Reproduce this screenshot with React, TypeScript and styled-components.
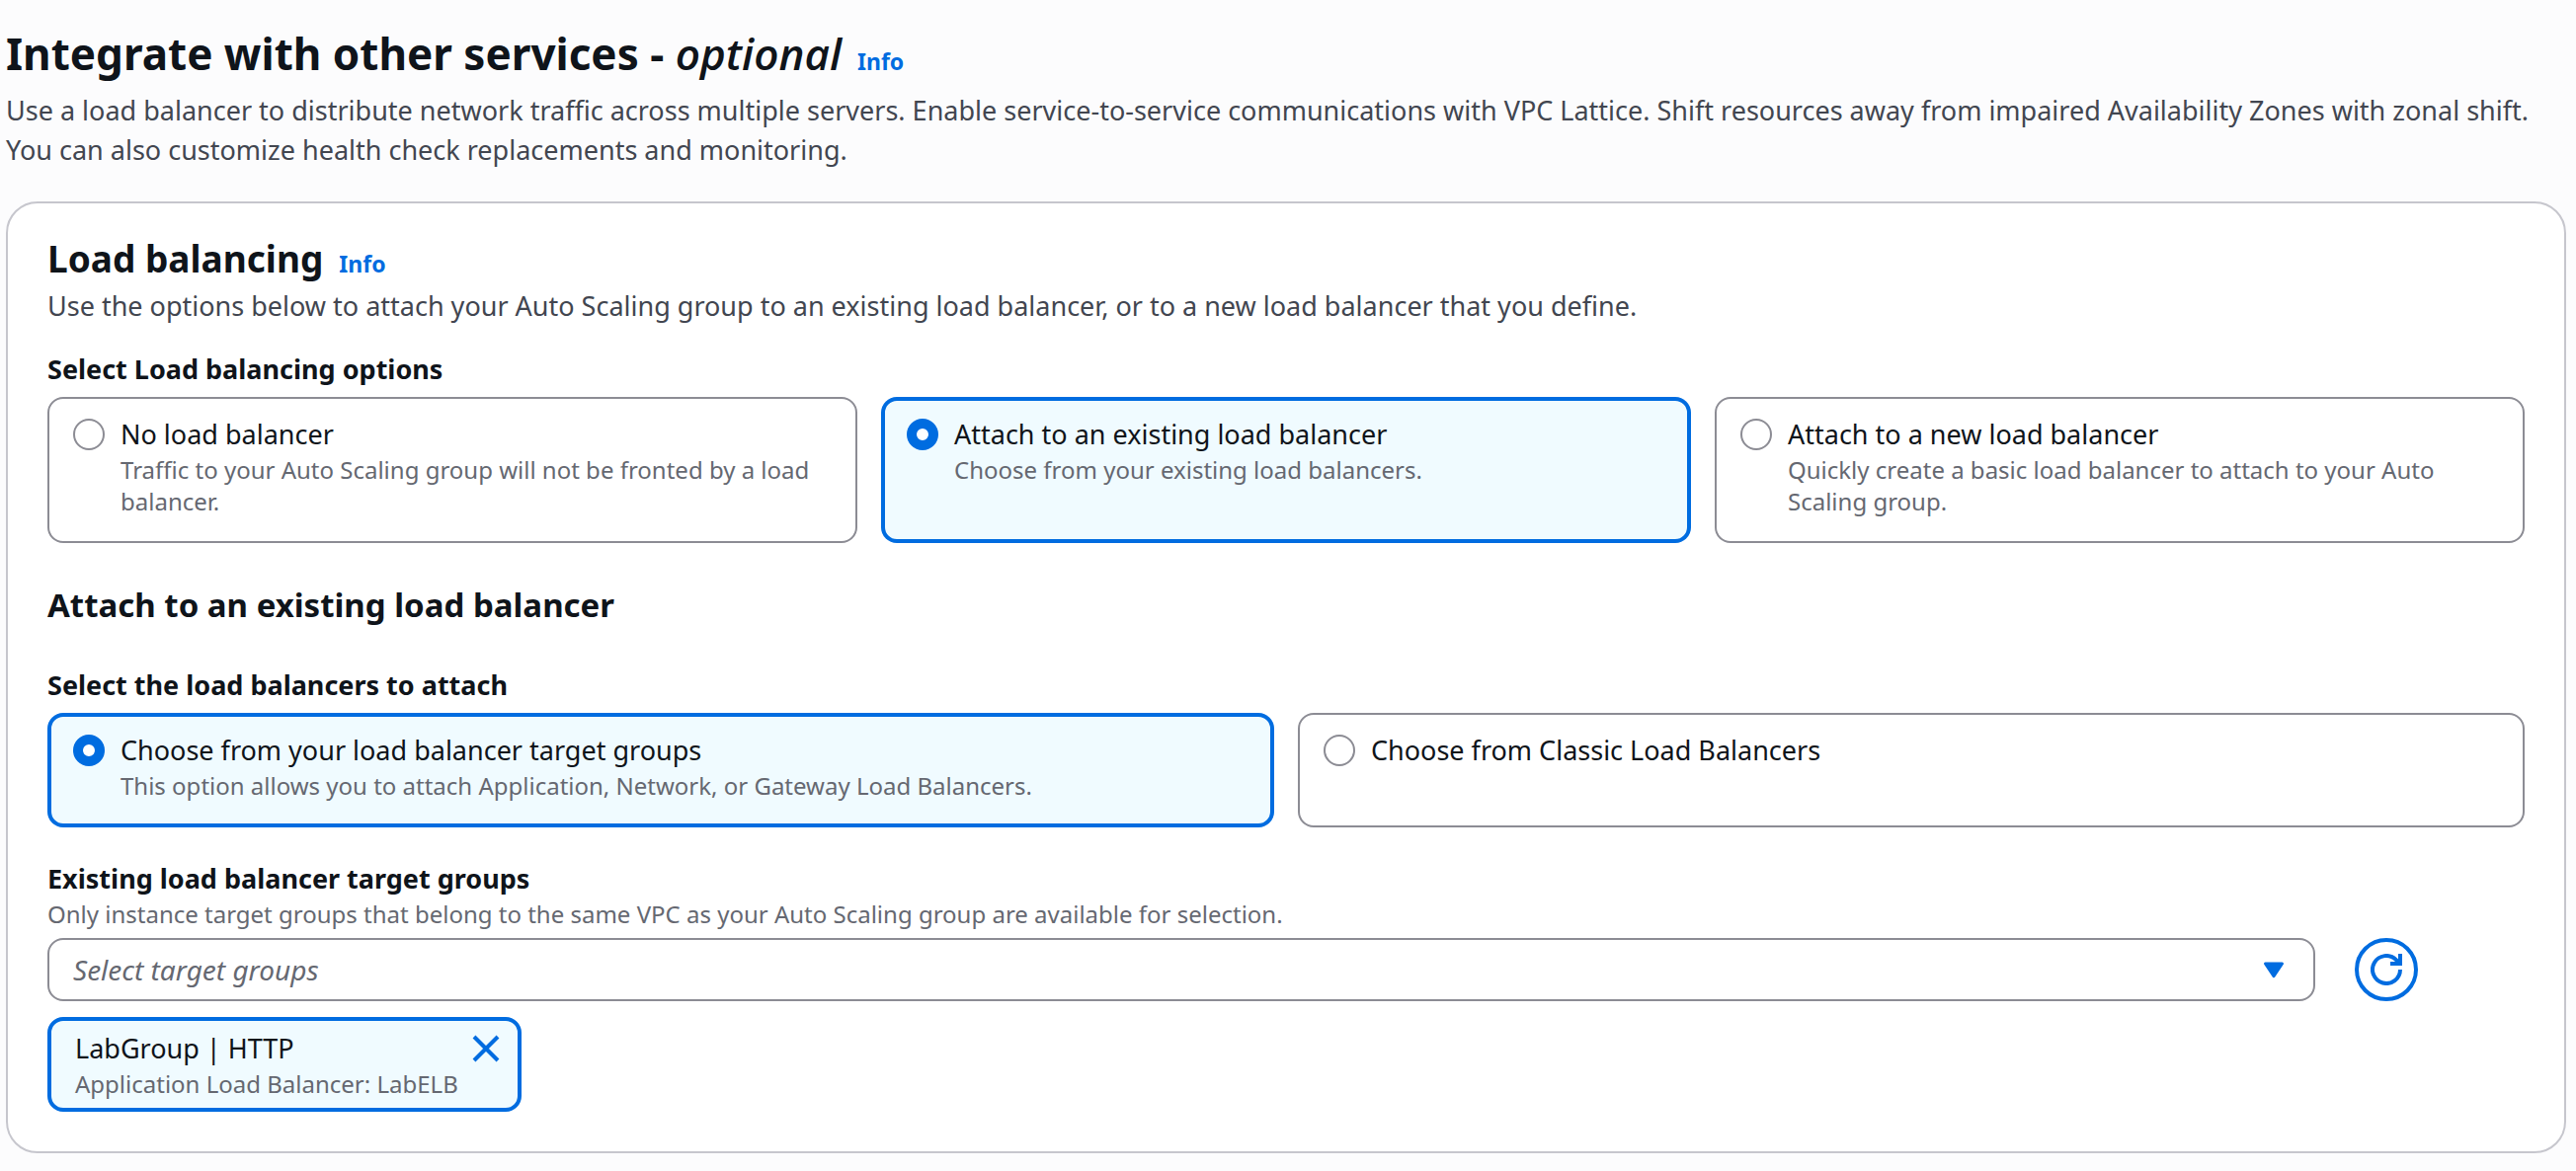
import React, { useId, useState } from "react";
import styled, { createGlobalStyle, css } from "styled-components";

const color = {
  page: "#fcfcfd",
  panel: "#ffffff",
  panelBorder: "#c6c6cd",
  controlBorder: "#8c8c94",
  heading: "#0f141a",
  body: "#424650",
  muted: "#656871",
  accent: "#006ce0",
  accentSoft: "#f0fbff",
};

const GlobalStyle = createGlobalStyle`
  *, *::before, *::after { box-sizing: border-box; }
  body {
    margin: 0;
    background: ${color.page};
    color: ${color.heading};
    font-family: "Noto Sans", "Open Sans", sans-serif;
    font-size: 27px;
    line-height: 40px;
  }
  h1, h2, h3, p, fieldset { margin: 0; }
`;

const Page = styled.main`
  display: flex;
  flex-direction: column;
  gap: 32px;
  padding: 24px 10px 16px 6px;
`;

const PageHeader = styled.header`
  display: flex;
  flex-direction: column;
  gap: 8px;
`;

const HeadingRow = styled.div`
  display: flex;
  align-items: baseline;
  gap: 16px;
`;

const PageTitle = styled.h1`
  font-size: 44px;
  line-height: 60px;
  font-weight: 700;

  em {
    font-family: "Open Sans", "Noto Sans", sans-serif;
    font-weight: 600;
  }
`;

const PanelTitle = styled.h2`
  font-size: 37px;
  line-height: 48px;
  font-weight: 700;
`;

const SectionTitle = styled.h3`
  padding-top: 2px;
  font-size: 33px;
  line-height: 42px;
  font-weight: 700;
`;

const InfoLink = styled.a`
  color: ${color.accent};
  font-size: 23px;
  line-height: 32px;
  font-weight: 700;
  text-decoration: none;
`;

const Lead = styled.p`
  color: ${color.body};
`;

const Panel = styled.section`
  display: flex;
  flex-direction: column;
  gap: 40px;
  padding: 32px 40px 40px;
  background: ${color.panel};
  border: 2px solid ${color.panelBorder};
  border-radius: 32px;
`;

const PanelIntro = styled.div`
  display: flex;
  flex-direction: column;
  gap: 24px;
`;

const PanelHeader = styled.header`
  display: flex;
  flex-direction: column;
  gap: 4px;
`;

const FieldStack = styled.div`
  display: flex;
  flex-direction: column;
  gap: 32px;
`;

const TileGroup = styled.fieldset`
  min-width: 0;
  padding: 0;
  border: 0;
`;

const TileLegend = styled.legend`
  padding: 0 0 8px;
  font-weight: 700;
`;

const TileGrid = styled.div<{ $columns: number }>`
  display: grid;
  grid-template-columns: repeat(${(p) => p.$columns}, minmax(0, 1fr));
  gap: 24px;
`;

const TileCard = styled.label<{ $selected: boolean }>`
  display: flex;
  align-items: flex-start;
  gap: 16px;
  padding: 18px 26px 26px;
  border-radius: 16px;
  box-shadow: inset 0 0 0 2px ${color.controlBorder};
  cursor: pointer;
  ${(p) =>
    p.$selected &&
    css`
      background: ${color.accentSoft};
      box-shadow: inset 0 0 0 4px ${color.accent};
    `}
`;

const Radio = styled.input`
  appearance: none;
  flex: none;
  width: 32px;
  height: 32px;
  margin: 4px 0;
  border: 2px solid ${color.controlBorder};
  border-radius: 50%;
  background: ${color.panel};

  &:checked {
    border: 10px solid ${color.accent};
  }
`;

const TileText = styled.span`
  display: flex;
  flex-direction: column;
  min-width: 0;
`;

const Hint = styled.span`
  display: block;
  color: ${color.muted};
  font-size: 24px;
  line-height: 32px;
`;

const FieldLabel = styled.label`
  display: block;
  font-weight: 700;
`;

const SelectRow = styled.div`
  display: grid;
  grid-template-columns: repeat(12, minmax(0, 1fr));
  column-gap: 40px;
  padding: 8px 0 16px;
`;

const SelectBox = styled.div`
  position: relative;
  grid-column: span 11;
`;

const Select = styled.select`
  appearance: none;
  display: block;
  width: 100%;
  height: 64px;
  padding: 0 80px 0 24px;
  border: 2px solid ${color.controlBorder};
  border-radius: 16px;
  background: ${color.panel};
  color: ${color.muted};
  font: inherit;
  font-size: 28px;
  font-style: italic;
`;

const Caret = styled.svg`
  position: absolute;
  top: 16px;
  right: 26px;
  width: 32px;
  height: 32px;
  pointer-events: none;
`;

const RefreshButton = styled.button`
  display: flex;
  align-items: center;
  justify-content: center;
  width: 64px;
  height: 64px;
  padding: 0;
  border: 4px solid ${color.accent};
  border-radius: 50%;
  background: ${color.panel};
  color: ${color.accent};
`;

const Token = styled.div`
  display: flex;
  align-items: flex-start;
  gap: 8px;
  width: fit-content;
  padding: 8px 12px 8px 24px;
  border: 4px solid ${color.accent};
  border-radius: 16px;
  background: ${color.accentSoft};
`;

const DismissButton = styled.button`
  display: flex;
  padding: 4px;
  border: 0;
  background: transparent;
  color: ${color.accent};
`;

type TileOption = { value: string; label: string; hint?: string };

function Tiles(props: { legend: string; options: TileOption[]; initial: string }) {
  const name = useId();
  const [value, setValue] = useState(props.initial);
  return (
    <TileGroup>
      <TileLegend>{props.legend}</TileLegend>
      <TileGrid $columns={props.options.length}>
        {props.options.map((option) => (
          <TileCard key={option.value} $selected={option.value === value}>
            <Radio
              type="radio"
              name={name}
              value={option.value}
              checked={option.value === value}
              onChange={() => setValue(option.value)}
            />
            <TileText>
              <span>{option.label}</span>
              {option.hint && <Hint>{option.hint}</Hint>}
            </TileText>
          </TileCard>
        ))}
      </TileGrid>
    </TileGroup>
  );
}

const balancingOptions: TileOption[] = [
  {
    value: "none",
    label: "No load balancer",
    hint: "Traffic to your Auto Scaling group will not be fronted by a load balancer.",
  },
  {
    value: "existing",
    label: "Attach to an existing load balancer",
    hint: "Choose from your existing load balancers.",
  },
  {
    value: "new",
    label: "Attach to a new load balancer",
    hint: "Quickly create a basic load balancer to attach to your Auto Scaling group.",
  },
];

const sourceOptions: TileOption[] = [
  {
    value: "target-groups",
    label: "Choose from your load balancer target groups",
    hint: "This option allows you to attach Application, Network, or Gateway Load Balancers.",
  },
  { value: "classic", label: "Choose from Classic Load Balancers" },
];

function TargetGroups() {
  const [attached, setAttached] = useState(true);
  return (
    <div>
      <FieldLabel htmlFor="target-groups">Existing load balancer target groups</FieldLabel>
      <Hint id="target-groups-hint">
        Only instance target groups that belong to the same VPC as your Auto Scaling group are available for selection.
      </Hint>
      <SelectRow>
        <SelectBox>
          <Select id="target-groups" aria-describedby="target-groups-hint" defaultValue="">
            <option value="">Select target groups</option>
          </Select>
          <Caret viewBox="0 0 32 32" aria-hidden="true">
            <path d="M7.500 10h17l-8.500 12.700z" fill={color.accent} stroke={color.accent} strokeWidth="3" strokeLinejoin="round" />
          </Caret>
        </SelectBox>
        <RefreshButton type="button" aria-label="Refresh target groups">
          <svg width="32" height="32" viewBox="0 0 32 32" fill="none" stroke="currentColor" strokeWidth="4" aria-hidden="true">
            <path d="M30 16a14 14 0 1 1-4.100-9.900l3.100 3.100" />
            <path d="M30 0v10H20" />
          </svg>
        </RefreshButton>
      </SelectRow>
      {attached && (
        <Token>
          <TileText>
            <span>LabGroup | HTTP</span>
            <Hint>Application Load Balancer: LabELB</Hint>
          </TileText>
          <DismissButton type="button" aria-label="Remove LabGroup" onClick={() => setAttached(false)}>
            <svg width="32" height="32" viewBox="0 0 32 32" fill="none" stroke="currentColor" strokeWidth="4" aria-hidden="true">
              <path d="M4 4l24 24M28 4L4 28" />
            </svg>
          </DismissButton>
        </Token>
      )}
    </div>
  );
}

export default function App() {
  return (
    <>
      <GlobalStyle />
      <Page>
        <PageHeader>
          <HeadingRow>
            <PageTitle>
              Integrate with other services - <em>optional</em>
            </PageTitle>
            <InfoLink href="#services-info">Info</InfoLink>
          </HeadingRow>
          <Lead>
            Use a load balancer to distribute network traffic across multiple servers. Enable service-to-service
            communications with VPC Lattice. Shift resources away from impaired Availability Zones with zonal shift. You
            can also customize health check replacements and monitoring.
          </Lead>
        </PageHeader>
        <Panel>
          <PanelIntro>
            <PanelHeader>
              <HeadingRow>
                <PanelTitle>Load balancing</PanelTitle>
                <InfoLink href="#load-balancing-info">Info</InfoLink>
              </HeadingRow>
              <Lead>
                Use the options below to attach your Auto Scaling group to an existing load balancer, or to a new load
                balancer that you define.
              </Lead>
            </PanelHeader>
            <Tiles legend="Select Load balancing options" options={balancingOptions} initial="existing" />
          </PanelIntro>
          <SectionTitle>Attach to an existing load balancer</SectionTitle>
          <FieldStack>
            <Tiles legend="Select the load balancers to attach" options={sourceOptions} initial="target-groups" />
            <TargetGroups />
          </FieldStack>
        </Panel>
      </Page>
    </>
  );
}
